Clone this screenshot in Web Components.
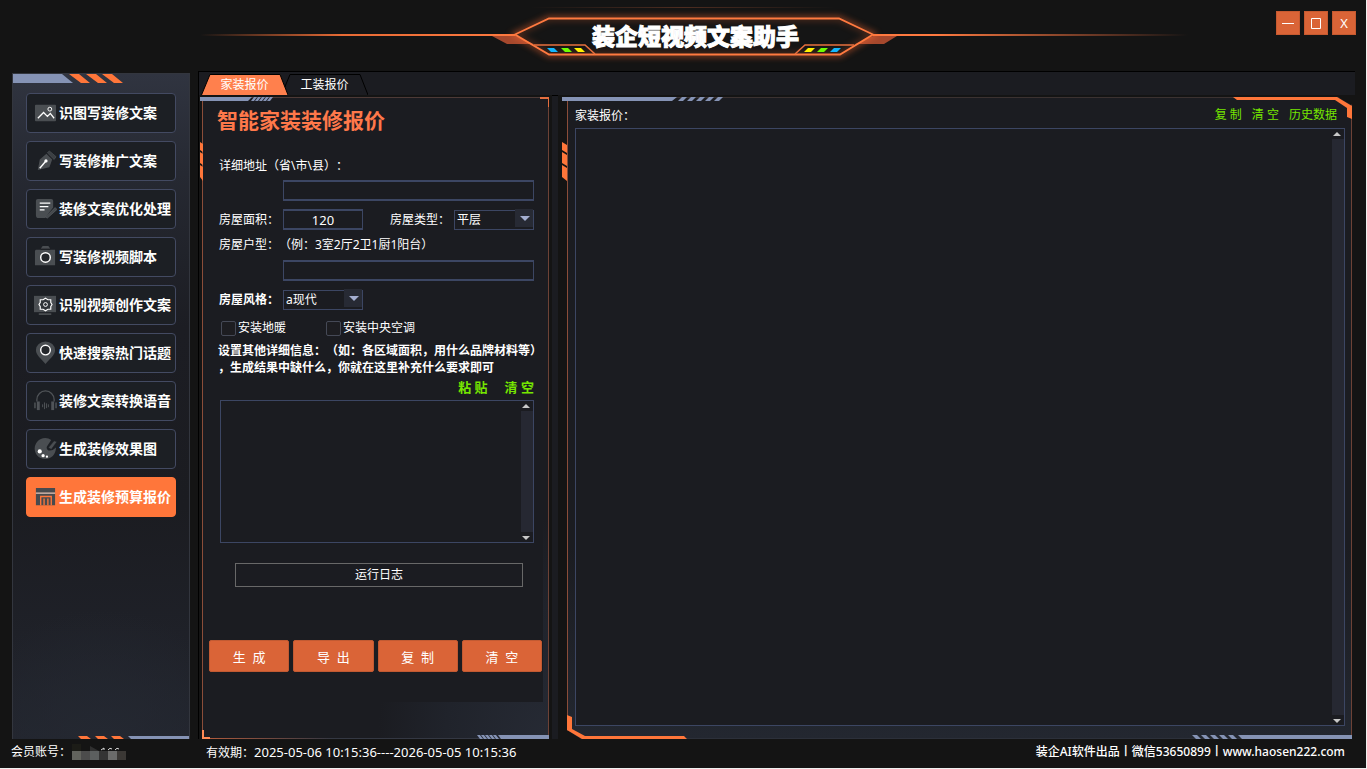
<!DOCTYPE html>
<html lang="zh-CN">
<head>
<meta charset="utf-8">
<title>装企短视频文案助手</title>
<style>
html { height: 100%; background: #f0f0f0; }
body {
  margin: 0; height: 100%; box-sizing: border-box; padding: 0 1px 1px 0;
  font-family: "Noto Sans", "Noto Sans CJK SC", sans-serif;
  font-size: 12px; color: #fff; text-spacing-trim: space-all;
  --orange: #ff763a; --steel: #8593b5; --line: #3c4663; --panel: #1b1c21; --green: #76e600;
}
</style>
</head>
<body>
<app-window></app-window>

<script>
class BaseElement extends HTMLElement {
  constructor() {
    super();
    this.attachShadow({ mode: 'open' });
    const template = document.createElement('template');
    template.innerHTML = this.html;
    this.shadowRoot.appendChild(template.content.cloneNode(true));
  }
}

// icons are drawn in a 24x24 box
const ICONS = {
  picture: `<rect x="1" y="4" width="22" height="17" rx="1" fill="#4a4e52"/>
    <path d="M4 18l6-6 4 4 3-3 4 5" fill="none" stroke="#fff" stroke-width="1.3"/><circle cx="16.500" cy="8.500" r="2" fill="none" stroke="#fff"/>`,
  pen: `<path d="M13 5l6 6-3 8-12 3 2-11z" fill="#4a4e52"/><path d="M14 4l2-2 7 6-2 3z" fill="#3b3f43" stroke="#565a5e" stroke-width=".6"/>
    <path d="M6 20l6-7" stroke="#fff" stroke-width="1.5"/><circle cx="12.500" cy="12.500" r="1.700" fill="#fff"/>`,
  note: `<path d="M4 2h14q2 0 2 2v7l-8 10v1H5q-3 0-3-3V4q0-2 2-2z" fill="#4a4e52"/>
    <path d="M12 21l10-10 2 2-10 9z" fill="#45494d" stroke="#62666a" stroke-width=".6"/>
    <path d="M6 6.500h11M6 10h9M6 13.500h5" stroke="#fff" stroke-width="1.300"/>`,
  camera: `<path d="M2 5h5v16H1V6zM7 5h10v16H7zM17 5h5v16h-5z" fill="#4a4e52"/><path d="M7 4l2-3h6l2 3z" fill="#4a4e52"/>
    <circle cx="12" cy="13" r="5" fill="#25282c" stroke="#fff" stroke-width="1.500"/><path d="M7 4.500h10" stroke="#1c1f24"/>`,
  monitor: `<rect x="0" y="3" width="23" height="17" fill="#4a4e52"/><path d="M5 22h13" stroke="#5b5f63" stroke-width="1.300"/>
    <path d="M12 5.500l2.500 1.500h3v3l1.300 2-1.300 2v3h-3L12 18.500 9.500 17h-3v-3l-1.300-2 1.300-2V7h3z" fill="#303438" stroke="#fff" stroke-width="1.200"/><circle cx="12" cy="12" r="2" fill="none" stroke="#fff"/>`,
  pin: `<path d="M12 24C8 19 2 15 2 9.500a10 9 0 0120 0C22 15 16 19 12 24z" fill="#4a4e52"/><circle cx="12" cy="9.500" r="5" fill="#25282c" stroke="#fff" stroke-width="1.500"/>`,
  headset: `<path d="M3 13v-2a9 9 0 0118 0v2" fill="none" stroke="#505458" stroke-width="1.300"/>
    <path d="M1 14v6M23 14v6" stroke="#505458" stroke-width="1.500"/><rect x="3" y="13" width="3" height="9" fill="#505458"/><rect x="18" y="13" width="3" height="9" fill="#505458"/>
    <path d="M9 16v3M11 14v7M13 15v5M15 16v3" stroke="#505458"/>`,
  palette: `<path d="M18 3A11 11 0 1022 16q1-3 1-5-4 4-8 3-3-2-1-5z" fill="#4a4e52"/><path d="M15 11l6-7 3 1-6 8z" fill="#4a4e52" stroke="#1c1f24" stroke-width=".6"/>
    <circle cx="6" cy="15" r="2.200" fill="#fff"/><circle cx="9.500" cy="19.500" r="1.700" fill="#fff"/><circle cx="13.500" cy="20.500" r="1.200" fill="#fff"/>`,
  store: `<path d="M2 3h20v5H2zM2 9h20v12H2z" fill="#474a4e"/><path d="M2 8.500h20" stroke="#b9bbbd" stroke-width="1.300"/>
    <path d="M7 21v-9h11v9M10.500 21v-7M14.500 21v-7" fill="none" stroke="#ff763a" stroke-width="1.400"/>`
};

class MenuItem extends BaseElement {
  static get observedAttributes() { return ['icon'] }
  get html() { return `
    <style>
    :host { display: block; }
    button {
      display: flex; align-items: center; gap: 2px; width: 100%; height: 40px; padding: 0 0 1px 7px;
      background: #1c1f24; border: 1px solid #434a62; border-radius: 4px;
      color: #fff; font: 700 14px/20px "Noto Sans", "Noto Sans CJK SC", sans-serif; white-space: nowrap; cursor: pointer;
    }
    svg { width: 23px; height: 23px; flex: none; }
    :host([active]) button { background: var(--orange); border-color: var(--orange); }
    </style>
    <button type="button"><svg viewBox="0 0 24 24" aria-hidden="true"></svg><span><slot></slot></span></button>
  `}
  attributeChangedCallback(name, oldValue, newValue) {
    this.shadowRoot.querySelector('svg').innerHTML = ICONS[newValue] || '';
  }
}
customElements.define('menu-item', MenuItem);

class SideMenu extends BaseElement {
  get html() { return `
    <style>
    :host {
      display: block; position: relative; box-sizing: border-box; border: 1px solid #33363e; border-bottom: 0;
      background:
        radial-gradient(ellipse 80% 130px at 50% 100%, #242831, transparent),
        linear-gradient(#303440, #262932 15%, #1c1d23 38%, #1b1c21 65%, #22252e);
    }
    nav { display: flex; flex-direction: column; gap: 8px; padding: 19px 13px; }
    svg { position: absolute; display: block; }
    .top { left: 0; top: 0; }
    .bottom { right: 0; bottom: 0; }
    </style>
    <svg class="top" width="112" height="9" aria-hidden="true">
      <path d="M0 0h49l11 9H0z" fill="#8593b5"/>
      <path d="M56 0h10l11 9H68zM73 0h10l11 9H85zM89 0h10l11 9h-9z" fill="#ff763a"/>
    </svg>
    <svg class="bottom" width="112" height="3" aria-hidden="true">
      <path d="M1 0h9l4 3H4zM18 0h9l4 3H21zM34 0h9l4 3H37z" fill="#ff763a"/>
      <path d="M51 0h61v3H54z" fill="#8593b5"/>
    </svg>
    <nav><slot></slot></nav>
  `}
}
customElements.define('side-menu', SideMenu);

class TitleBanner extends BaseElement {
  get html() { return `
    <style>
    :host { display: flex; align-items: flex-start; }
    .line { flex: 1; height: 2px; margin-top: 34px; background: linear-gradient(90deg, transparent, #e86b35 45%, #ff7a40); }
    .line.right { background: linear-gradient(270deg, transparent, #6b3825 30%, #ff7a40 80%); }
    .plate { position: relative; width: 358px; height: 71px; display: flex; justify-content: center; }
    svg { position: absolute; left: -26px; top: 0; }
    h1 {
      position: relative; margin: 18px 0 0 3px; height: 34px; -webkit-text-stroke: 1px #fff;
      font: 900 23px/34px "Noto Sans CJK SC", sans-serif; white-space: nowrap;
    }
    </style>
    <div class="line"></div>
    <div class="plate">
      <svg width="410" height="71" viewBox="489 0 410 71" fill="none" aria-hidden="true">
        <defs>
          <filter id="glow" x="-10%" y="-50%" width="120%" height="200%"><feGaussianBlur stdDeviation="3"/></filter>
          <linearGradient id="faint"><stop offset="0" stop-color="#f74" stop-opacity="0"/><stop offset=".5" stop-color="#f74" stop-opacity=".25"/><stop offset="1" stop-color="#f74" stop-opacity="0"/></linearGradient>
        </defs>
        <rect x="530" y="7" width="306" height="1" fill="url(#faint)"/>
        <path d="M492 36h24l18 8h-27zM897 36h-24l-18 8h29z" fill="#a5482d"/>
        <path d="M515 34.500L549 18.500H839L873 34.500 840 54.500H549z" stroke="#ff6a30" stroke-width="5" opacity=".5" filter="url(#glow)"/>
        <path d="M515 34.500L549 18.500H839L873 34.500 840 54.500H549z" fill="#151515" fill-opacity=".5" stroke="#ff7a40" stroke-width="1.800"/>
        <path d="M534 45h51l10 9M854 45h-49l-10 9" stroke="#e8703e" stroke-width="1.600"/>
        <path d="M547 48h7l4 4h-7zM841 48h-7l-4 4h7z" fill="#12b8ff"/>
        <path d="M561 48h7l4 4h-7zM828 48h-7l-4 4h7z" fill="#6eff00"/>
        <path d="M574 48h7l4 4h-7zM815 48h-7l-4 4h7z" fill="#fff200"/>
      </svg>
      <h1><slot></slot></h1>
    </div>
    <div class="line right"></div>
  `}
}
customElements.define('title-banner', TitleBanner);

class WindowButtons extends BaseElement {
  get html() { return `
    <style>
    :host { display: flex; gap: 4px; }
    button {
      width: 24px; height: 24px; padding: 0; background: #da6437; border: 1px solid #c65a30; color: #fff;
      font: 13px/20px "Noto Sans", sans-serif; display: grid; place-items: center;
    }
    </style>
    <button type="button" aria-label="最小化"><svg width="14" height="14"><path d="M1 7.500h12" stroke="#fff"/></svg></button>
    <button type="button" aria-label="最大化"><svg width="14" height="14" fill="none"><path d="M2.500 2.500h9v10h-9z" stroke="#fff"/></svg></button>
    <button type="button" aria-label="关闭">X</button>
  `}
}
customElements.define('window-buttons', WindowButtons);

class TabButton extends BaseElement {
  get html() { return `
    <style>
    :host { display: block; position: relative; width: 87px; height: 21px; margin-right: -7px; }
    :host([active]) { z-index: 1; }
    button {
      position: relative; display: block; width: 100%; height: 21px; padding: 0; border: 0; background: none; color: #fff;
      font: 12px/21px "Noto Sans", "Noto Sans CJK SC", sans-serif;
    }
    svg { position: absolute; inset: 0; }
    path { fill: var(--panel); stroke: #000; }
    :host([active]) path { fill: #ff804d; }
    </style>
    <svg width="87" height="21" aria-hidden="true"><path d="M.500 21L9 .500h70L87 21"/></svg>
    <button type="button" role="tab"><slot></slot></button>
  `}
}
customElements.define('tab-button', TabButton);

// framed box, the corner drawings come in through the deco slot
class HudPanel extends BaseElement {
  get html() { return `
    <style>
    :host { display: flex; flex-direction: column; position: relative; box-sizing: border-box; border: 1px solid #3a3d46; }
    </style>
    <slot name="deco"></slot>
    <slot></slot>
  `}
}
customElements.define('hud-panel', HudPanel);

class TextArea extends BaseElement {
  static get observedAttributes() { return ['label'] }
  get html() { return `
    <style>
    :host { display: flex; box-sizing: border-box; border: 1px solid var(--line); background: var(--panel); }
    textarea {
      flex: 1; min-width: 0; resize: none; border: 0; padding: 4px; outline: 0; background: none; color: #fff; overflow: hidden;
      font: 12px/17px "Noto Sans", "Noto Sans CJK SC", sans-serif;
    }
    .rail { width: 12px; display: flex; flex-direction: column; }
    .track { flex: 1; background: #262832; }
    svg { display: block; }
    </style>
    <textarea></textarea>
    <div class="rail" aria-hidden="true">
      <svg width="12" height="10"><path d="M1 7l4-4 4 4z" fill="#c8c8c8"/></svg>
      <div class="track"></div>
      <svg width="12" height="10"><path d="M1 4l4 4 4-4z" fill="#c8c8c8"/></svg>
    </div>
  `}
  attributeChangedCallback(name, oldValue, newValue) {
    this.shadowRoot.querySelector('textarea').setAttribute('aria-label', newValue);
  }
}
customElements.define('text-area', TextArea);

class QuoteForm extends BaseElement {
  get html() { return `
    <style>
    :host { display: block; }
    hud-panel {
      height: 100%; padding: 0 5px 36px 4px;
      border-color: #4d3a37 #6d4236 #343843 #8b4d39;
      background: radial-gradient(ellipse 170px 220px at 100% 100%, #262a34, #20232b 60%, var(--panel));
    }
    form { flex: 1; display: flex; flex-direction: column; gap: 8px; background: var(--panel); padding: 7px 0 0 0; }
    h2 { margin: 0 0 15px 10px; font: 700 21px/28px "Noto Sans CJK SC", sans-serif; color: #ff784a; }
    .group { display: flex; flex-direction: column; gap: 4px; padding: 0 9px 0 12px; }
    .group.loose { gap: 5px; }
    .row { display: grid; grid-template-columns: 64px 80px 91px 1fr; align-items: center; height: 21px; }
    .row label:nth-of-type(2) { padding-left: 27px; }
    .wide { grid-column: 2 / -1; }
    label { line-height: 20px; white-space: nowrap; }
    .strong { font-weight: 700; }
    input:not([type=checkbox]) {
      box-sizing: border-box; width: 100%; height: 21px; border: 1px solid var(--line); border-width: 2px 1px; background: none; color: #fff;
      font: 13px/17px "Noto Sans", sans-serif; text-align: center; padding: 0;
    }
    .select { position: relative; height: 20px; }
    select {
      appearance: none; display: block; box-sizing: border-box; width: 100%; height: 20px; border: 1px solid var(--line); border-radius: 0;
      background: var(--panel); color: #fff; padding: 0 0 0 2px; font: 12px/17px "Noto Sans", "Noto Sans CJK SC", sans-serif;
    }
    .select svg { position: absolute; right: 1px; top: -1px; background: #272a34; pointer-events: none; }
    .checks { display: flex; gap: 27px; height: 20px; margin-left: 2px; }
    .checks label { display: flex; align-items: center; gap: 2px; min-width: 78px; }
    input[type=checkbox] { appearance: none; flex: none; box-sizing: border-box; width: 15px; height: 15px; margin: 0; border: 1px solid #454956; border-radius: 2px; background: #1d1d21; }
    p { margin: 0 -9px 0 -1px; line-height: 17px; font-weight: 700; white-space: nowrap; }
    .links { display: flex; justify-content: flex-end; gap: 17px; height: 16px; line-height: 14px; font-size: 13px; font-weight: 700; }
    a { color: var(--green); text-decoration: none; }
    text-area { height: 143px; margin-left: 1px; }
    .log {
      margin: 12px 20px 0 28px; height: 24px; border: 1px solid #686868; background: none; color: #fff; padding: 0;
      font: 12px/22px "Noto Sans", "Noto Sans CJK SC", sans-serif;
    }
    .actions { display: grid; grid-template-columns: repeat(4, 1fr); gap: 4px; margin: 45px 1px 0 2px; }
    .actions button {
      height: 32px; border: 1px solid #c25a32; border-radius: 2px; background: #da6437; color: #fff; padding: 1px 0 0;
      font: 13px/20px "Noto Sans", "Noto Sans CJK SC", sans-serif; white-space: pre;
    }
    .deco { position: absolute; }
    </style>
    <hud-panel>
      <svg slot="deco" class="deco" style="left:-3px;top:-1px" width="74" height="5"><path d="M0 0h52l-4 4H0zM54 0h3l-3 4h-3zM58 0h3l-3 4h-3zM62 0h3l-3 4h-3zM66 0h3l-3 4h-3zM70 0h3l-3 4h-3z" fill="#8593b5"/></svg>
      <svg slot="deco" class="deco" style="right:-1px;top:-1px" width="9" height="10"><path d="M0 0h9v10H8V2H0z" fill="#e56e3f"/></svg>
      <svg slot="deco" class="deco" style="left:-3px;top:44px" width="3" height="40"><path d="M0 0l3 2v8L0 8zM0 10l3 2v11l-3-2zM0 23l3 2v14l-3-4z" fill="#ff763a"/></svg>
      <svg slot="deco" class="deco" style="left:-1px;bottom:-1px" width="130" height="9">
        <defs><linearGradient id="fade"><stop offset="0" stop-color="#b65c3c"/><stop offset="1" stop-color="#b65c3c" stop-opacity="0"/></linearGradient></defs>
        <rect y="8" width="130" height="1" fill="url(#fade)"/><path d="M0 0h2v7h6v2H0z" fill="#ff8a55"/></svg>
      <svg slot="deco" class="deco" style="right:-1px;bottom:-1px" width="72" height="4"><path d="M0 0h3l3 4H3zM4 0h3l3 4H7zM8 0h3l3 4h-3zM12 0h3l3 4h-3zM16 0h3l3 4h-3zM21 0h51v4H24z" fill="#8593b5"/></svg>
      <form onsubmit="return false">
        <h2>智能家装装修报价</h2>
        <div class="group">
          <label for="address">详细地址（省\\市\\县）：</label>
          <div class="row"><input id="address" class="wide" type="text"></div>
        </div>
        <div class="group loose">
          <div class="row">
            <label for="area">房屋面积：</label><input id="area" type="text" value="120">
            <label for="kind">房屋类型：</label>
            <div class="select"><select id="kind"><option>平层</option></select>
              <svg width="18" height="18"><path d="M5 7h10l-5 5z" fill="#a4aed0"/></svg></div>
          </div>
          <label for="layout">房屋户型：（例：3室2厅2卫1厨1阳台）</label>
          <div class="row"><input id="layout" class="wide" type="text"></div>
        </div>
        <div class="group">
          <div class="row">
            <label for="look" class="strong">房屋风格：</label>
            <div class="select"><select id="look"><option>a现代</option></select>
              <svg width="18" height="18"><path d="M5 7h10l-5 5z" fill="#a4aed0"/></svg></div>
          </div>
        </div>
        <div class="group">
          <div class="checks">
            <label><input type="checkbox">安装地暖</label>
            <label><input type="checkbox">安装中央空调</label>
          </div>
          <p>设置其他详细信息：（如：各区域面积，用什么品牌材料等）<br>，生成结果中缺什么，你就在这里补充什么要求即可</p>
          <div class="links"><a href="#">粘 贴</a><a href="#">清 空</a></div>
          <text-area label="其他详细信息"></text-area>
        </div>
        <button type="button" class="log">运行日志</button>
        <div class="actions">
          <button type="button">生  成</button><button type="button">导  出</button><button type="button">复  制</button><button type="button">清  空</button>
        </div>
      </form>
    </hud-panel>
  `}
}
customElements.define('quote-form', QuoteForm);

class QuoteResult extends BaseElement {
  get html() { return `
    <style>
    :host { display: block; }
    hud-panel {
      height: 100%; padding: 7px 6px 12px 7px; border-color: #3b3231 #6d4236 #2c303a #8b4d39;
      background: linear-gradient(#1b1c21 70%, #232730);
    }
    header { display: flex; justify-content: space-between; height: 23px; line-height: 21px; padding-right: 8px; }
    nav { display: flex; gap: 10px; line-height: 19px; }
    a { color: var(--green); text-decoration: none; }
    text-area { flex: 1; }
    .deco { position: absolute; }
    </style>
    <hud-panel>
      <svg slot="deco" class="deco" style="left:-6px;top:-1px" width="162" height="5"><path d="M0 0h115l-5 4H0zM120 0h5l-4 4h-5zM129 0h5l-4 4h-5zM138 0h5l-4 4h-5zM147 0h5l-4 4h-5zM156 0h5l-4 4h-5z" fill="#8593b5"/></svg>
      <svg slot="deco" class="deco" style="left:-6px;top:44px" width="6" height="40"><path d="M0 0l5 3v8L0 8zM0 10l5 3v11l-5-3zM0 23l5 3v13l-5-4z" fill="#ff763a"/></svg>
      <svg slot="deco" class="deco" style="right:-1px;top:-1px" width="119" height="24">
        <path d="M105 0h14v8z" fill="#141414"/><path d="M0 0h104l15 9v13l-5-2V11l-12-8H4z" fill="#ff763a"/></svg>
      <svg slot="deco" class="deco" style="left:-1px;bottom:-1px" width="120" height="24">
        <path d="M0 15v9h14z" fill="#141414"/><path d="M0 0l5 2v12l13 7h99l3 3H15L0 15z" fill="#ff763a"/></svg>
      <svg slot="deco" class="deco" style="right:-1px;bottom:-1px" width="160" height="4"><path d="M0 0h5l4 4H4zM9 0h5l4 4h-5zM18 0h5l4 4h-5zM27 0h5l4 4h-5zM36 0h5l4 4h-5zM46 0h114v4H50z" fill="#8593b5"/></svg>
      <header><span>家装报价：</span>
        <nav><a href="#">复 制</a><a href="#">清 空</a><a href="#">历史数据</a></nav></header>
      <text-area label="家装报价"></text-area>
    </hud-panel>
  `}
}
customElements.define('quote-result', QuoteResult);

class StatusBar extends BaseElement {
  get html() { return `
    <style>
    :host { display: grid; grid-template-columns: 195px 1fr auto; padding: 0 21px 0 11px; line-height: 26px; white-space: nowrap; }
    .account { display: flex; align-items: center; gap: 1px; height: 25px; }
    time { font-size: 13px; }
    .about { font-weight: 500; }
    </style>
    <div class="account">会员账号：
      <svg width="54" height="16" aria-hidden="true">
        <path d="M0 7h9v9H0z" fill="#62635d"/><path d="M9 7h9v9H9z" fill="#4c4c4c"/><path d="M18 7h9v9h-9z" fill="#5c5f5f"/>
        <path d="M27 7h9v9h-9z" fill="#343434"/><path d="M36 7h9v9h-9z" fill="#6b6b6a"/><path d="M45 7h9v9h-9z" fill="#3b3835"/>
        <path d="M0 0h9v7H0z" fill="#1c1c17"/><path d="M18 2l9 5h-9z" fill="#303030"/><path d="M29 6l3-2v2M36 6q2-3 4-1M43 6q2-3 4-1" stroke="#ddd" fill="none"/>
      </svg>
    </div>
    <div>有效期：<time>2025-05-06 10:15:36----2026-05-05 10:15:36</time></div>
    <div class="about">装企AI软件出品丨微信53650899丨www.haosen222.com</div>
  `}
}
customElements.define('status-bar', StatusBar);

class AppWindow extends BaseElement {
  get html() { return `
    <style>
    :host { display: grid; grid-template-rows: 71px 1fr 29px; height: 100%; min-height: 720px; background: #141414; }
    .head { display: grid; grid-template-columns: 200px 1fr 178px; }
    title-banner { grid-column: 2; }
    window-buttons { justify-self: end; margin: 11px 10px 0 0; }
    .body { display: grid; grid-template-columns: 178px 1fr; gap: 8px; padding: 0 11px 0 12px; }
    side-menu { margin-top: 2px; }
    main { display: flex; flex-direction: column; border: solid #000; border-width: 1px 0 0 1px; }
    .tabs { display: flex; padding: 2px 0 0 2px; background: var(--panel); }
    .panes { flex: 1; display: grid; grid-template-columns: 353px 6px 1fr; }
    quote-form { margin: 2px 3px 0 3px; }
    .divider { background: var(--panel); border-top: 1px solid #000; }
    quote-result { margin: 2px 3px 0 9px; }
    </style>
    <div class="head">
      <title-banner>装企短视频文案助手</title-banner>
      <window-buttons></window-buttons>
    </div>
    <div class="body">
      <side-menu>
        <menu-item icon="picture">识图写装修文案</menu-item>
        <menu-item icon="pen">写装修推广文案</menu-item>
        <menu-item icon="note">装修文案优化处理</menu-item>
        <menu-item icon="camera">写装修视频脚本</menu-item>
        <menu-item icon="monitor">识别视频创作文案</menu-item>
        <menu-item icon="pin">快速搜索热门话题</menu-item>
        <menu-item icon="headset">装修文案转换语音</menu-item>
        <menu-item icon="palette">生成装修效果图</menu-item>
        <menu-item icon="store" active>生成装修预算报价</menu-item>
      </side-menu>
      <main>
        <div class="tabs" role="tablist"><tab-button active>家装报价</tab-button><tab-button>工装报价</tab-button></div>
        <div class="panes">
          <quote-form></quote-form>
          <div class="divider"></div>
          <quote-result></quote-result>
        </div>
      </main>
    </div>
    <status-bar></status-bar>
  `}
}
customElements.define('app-window', AppWindow);
</script>
</body>
</html>
